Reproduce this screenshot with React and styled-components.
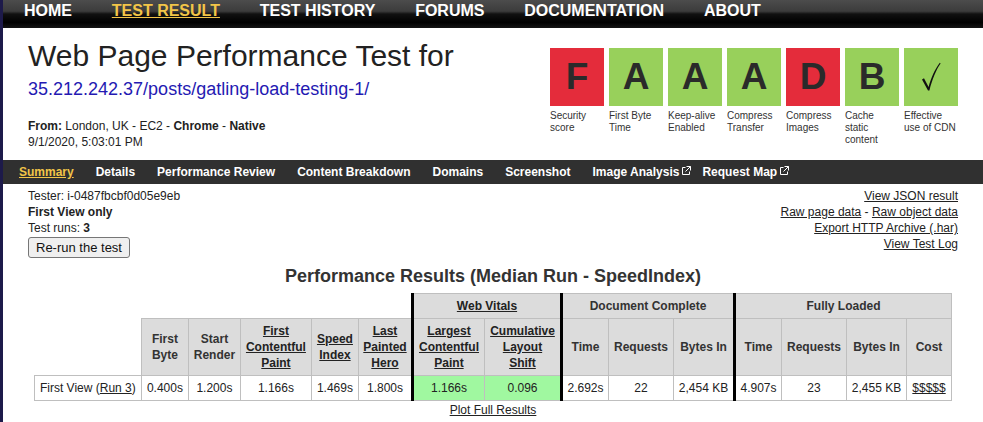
import React from 'react';
import styled, { createGlobalStyle } from 'styled-components';

const GlobalStyle = createGlobalStyle`
  html, body {
    margin: 0;
    padding: 0;
    background: #1d1a4a;
  }
  body {
    font-family: "Liberation Sans", Arial, sans-serif;
    color: #222;
  }
`;

const Page = styled.div`
  margin-left: 3px;
  min-height: 100vh;
  background: #fff;
`;

const TopNav = styled.nav`
  height: 28px;
  display: flex;
  align-items: flex-start;
  gap: 39.8px;
  padding-left: 21px;
  background: linear-gradient(#4c4c4c 0%, #3c3c3c 40%, #111 50%, #000 80%, #141414 100%);
`;

const TopLink = styled.a`
  font-size: 16px;
  font-weight: bold;
  line-height: 22px;
  color: ${({ $active }) => ($active ? '#f2c548' : '#fff')};
  text-decoration: ${({ $active }) => ($active ? 'underline' : 'none')};
`;

const Header = styled.header`
  display: flex;
  justify-content: space-between;
  padding: 10px 25px 0 25px;
  height: 122px;
`;

const TitleBlock = styled.div`
  display: flex;
  flex-direction: column;
`;

const Title = styled.h1`
  margin: 0;
  font-size: 30px;
  line-height: 36px;
  font-weight: normal;
  color: #222;
`;

const UrlLink = styled.a`
  margin-top: 4px;
  font-size: 18px;
  line-height: 22px;
  color: #2419b2;
  text-decoration: none;
`;

const Meta = styled.div`
  margin-top: 18px;
  font-size: 12px;
  line-height: 16px;
  color: #222;
`;

const Grades = styled.ul`
  display: flex;
  gap: 5px;
  margin: 10px 0 0 0;
  padding: 0;
  list-style: none;
`;

const Grade = styled.li`
  width: 54px;
  display: flex;
  flex-direction: column;
`;

const GradeBox = styled.div`
  height: 58px;
  display: flex;
  align-items: center;
  justify-content: center;
  background: ${({ $bad }) => ($bad ? '#e42c3b' : '#98d05b')};
  color: #2a2a2a;
  font-size: 37px;
  font-weight: bold;
`;

const GradeLabel = styled.div`
  margin-top: 4px;
  font-size: 10px;
  line-height: 12px;
  color: #333;
`;

const SubNav = styled.nav`
  height: 24px;
  display: flex;
  align-items: center;
  padding-left: 16px;
  background: #303030;
`;

const SubLink = styled.a`
  display: flex;
  align-items: center;
  margin-right: ${({ $external }) => ($external ? '11px' : '22px')};
  font-size: 12px;
  font-weight: bold;
  color: ${({ $active }) => ($active ? '#f2c548' : '#fff')};
  text-decoration: ${({ $active }) => ($active ? 'underline' : 'none')};

  svg {
    margin-left: 3px;
    margin-top: -3px;
  }
`;

const InfoRow = styled.div`
  display: flex;
  justify-content: space-between;
  padding: 4px 25px 0 25px;
  font-size: 12px;
  line-height: 16px;
`;

const InfoLeft = styled.div`
  display: flex;
  flex-direction: column;
  align-items: flex-start;
`;

const InfoRight = styled.div`
  display: flex;
  flex-direction: column;
  align-items: flex-end;
`;

const Button = styled.button`
  margin-top: 1px;
  height: 21px;
  padding: 0 7px;
  font-family: "Liberation Sans", Arial, sans-serif;
  font-size: 13px;
  color: #111;
  background: #efefef;
  border: 1px solid #767676;
  border-radius: 3px;
`;

const TextLink = styled.a`
  color: #222;
  text-decoration: underline;
`;

const ResultsTitle = styled.h2`
  margin: 6px 0 0 0;
  text-align: center;
  font-size: 18px;
  line-height: 24px;
  font-weight: bold;
  color: #333;
`;

const Table = styled.table`
  margin: 5px auto 0 auto;
  border-collapse: collapse;
  table-layout: fixed;
  width: 917px;
  font-size: 12px;
  line-height: 16px;
`;

const Th = styled.th`
  padding: 4px 2px;
  height: ${({ $group }) => ($group ? '16px' : '48px')};
  background: #dcdcdc;
  border: 1px solid #bfbfbf;
  border-left: ${({ $start }) => ($start ? '3px solid #000' : '1px solid #bfbfbf')};
  color: #333;
  font-weight: bold;
  text-align: center;
  vertical-align: middle;

  a {
    color: #222;
  }
`;

const Blank = styled.th`
  border: none;
  background: transparent;
`;

const Td = styled.td`
  padding: 4px 2px;
  height: 15px;
  border: 1px solid #bfbfbf;
  border-left: ${({ $start }) => ($start ? '3px solid #000' : '1px solid #bfbfbf')};
  background: ${({ $good }) => ($good ? '#a0f8a0' : '#fff')};
  color: #222;
  text-align: ${({ $left }) => ($left ? 'left' : 'center')};
  padding-left: ${({ $left }) => ($left ? '5px' : '2px')};
  white-space: nowrap;
`;

const PlotLink = styled.div`
  margin-top: 1px;
  text-align: center;
  font-size: 12px;
  line-height: 16px;
`;

const ExternalIcon = () => (
  <svg width="9" height="9" viewBox="0 0 9 9" fill="none" stroke="#fff" strokeWidth="1">
    <path d="M3.5 1.5H0.5V8.5H7.5V5.5" />
    <path d="M4.5 0.5H8.5V4.5" />
    <path d="M8.5 0.5L3.5 5.5" />
  </svg>
);

const CheckMark = () => (
  <svg width="20" height="30" viewBox="0 0 20 30">
    <path
      d="M1 17.5 L3 16.2 L7.6 25 C10 16 14 7 18.8 0.8 L19.6 1.6 C15 8 11.2 17.5 8.4 28.5 L7 28.5 Z"
      fill="#111"
    />
  </svg>
);

const topLinks = ['HOME', 'TEST RESULT', 'TEST HISTORY', 'FORUMS', 'DOCUMENTATION', 'ABOUT'];

const grades = [
  { value: 'F', label: 'Security score', bad: true },
  { value: 'A', label: 'First Byte Time' },
  { value: 'A', label: 'Keep-alive Enabled' },
  { value: 'A', label: 'Compress Transfer' },
  { value: 'D', label: 'Compress Images', bad: true },
  { value: 'B', label: 'Cache static content' },
  { value: 'check', label: 'Effective use of CDN' },
];

const subLinks = [
  { name: 'Summary', active: true },
  { name: 'Details' },
  { name: 'Performance Review' },
  { name: 'Content Breakdown' },
  { name: 'Domains' },
  { name: 'Screenshot' },
  { name: 'Image Analysis', external: true },
  { name: 'Request Map', external: true },
];

const colWidths = [107, 47, 52, 71, 47, 54, 72, 77, 47, 65, 61, 47, 65, 60, 45];

const headers = [
  { lines: ['First', 'Byte'] },
  { lines: ['Start', 'Render'] },
  { lines: ['First', 'Contentful', 'Paint'], link: true },
  { lines: ['Speed', 'Index'], link: true },
  { lines: ['Last', 'Painted', 'Hero'], link: true },
  { lines: ['Largest', 'Contentful', 'Paint'], link: true, start: true },
  { lines: ['Cumulative', 'Layout', 'Shift'], link: true },
  { lines: ['Time'], start: true },
  { lines: ['Requests'] },
  { lines: ['Bytes In'] },
  { lines: ['Time'], start: true },
  { lines: ['Requests'] },
  { lines: ['Bytes In'] },
  { lines: ['Cost'] },
];

const values = [
  { v: '0.400s' },
  { v: '1.200s' },
  { v: '1.166s' },
  { v: '1.469s' },
  { v: '1.800s' },
  { v: '1.166s', good: true, start: true },
  { v: '0.096', good: true },
  { v: '2.692s', start: true },
  { v: '22' },
  { v: '2,454 KB' },
  { v: '4.907s', start: true },
  { v: '23' },
  { v: '2,455 KB' },
];

const renderLines = lines =>
  lines.map((line, i) => (
    <React.Fragment key={line + i}>
      {i > 0 && <br />}
      {line}
    </React.Fragment>
  ));

const App = () => (
  <>
    <GlobalStyle />
    <Page>
      <TopNav>
        {topLinks.map(name => (
          <TopLink key={name} href="#" $active={name === 'TEST RESULT'}>
            {name}
          </TopLink>
        ))}
      </TopNav>

      <Header>
        <TitleBlock>
          <Title>Web Page Performance Test for</Title>
          <UrlLink href="#">35.212.242.37/posts/gatling-load-testing-1/</UrlLink>
          <Meta>
            <b>From:</b> London, UK - EC2 - <b>Chrome</b> - <b>Native</b>
            <br />
            9/1/2020, 5:03:01 PM
          </Meta>
        </TitleBlock>
        <Grades>
          {grades.map(g => (
            <Grade key={g.label}>
              <GradeBox $bad={g.bad}>{g.value === 'check' ? <CheckMark /> : g.value}</GradeBox>
              <GradeLabel>{g.label}</GradeLabel>
            </Grade>
          ))}
        </Grades>
      </Header>

      <SubNav>
        {subLinks.map(link => (
          <SubLink key={link.name} href="#" $active={link.active} $external={link.external}>
            {link.name}
            {link.external && <ExternalIcon />}
          </SubLink>
        ))}
      </SubNav>

      <InfoRow>
        <InfoLeft>
          <span>Tester: i-0487fbcbf0d05e9eb</span>
          <b>First View only</b>
          <span>
            Test runs: <b>3</b>
          </span>
          <Button>Re-run the test</Button>
        </InfoLeft>
        <InfoRight>
          <TextLink href="#">View JSON result</TextLink>
          <span>
            <TextLink href="#">Raw page data</TextLink> - <TextLink href="#">Raw object data</TextLink>
          </span>
          <TextLink href="#">Export HTTP Archive (.har)</TextLink>
          <TextLink href="#">View Test Log</TextLink>
        </InfoRight>
      </InfoRow>

      <ResultsTitle>Performance Results (Median Run - SpeedIndex)</ResultsTitle>

      <Table>
        <colgroup>
          {colWidths.map((w, i) => (
            <col key={i} style={{ width: w }} />
          ))}
        </colgroup>
        <thead>
          <tr>
            <Blank colSpan={6} />
            <Th colSpan={2} $group $start>
              <a href="#">Web Vitals</a>
            </Th>
            <Th colSpan={3} $group $start>
              Document Complete
            </Th>
            <Th colSpan={4} $group $start>
              Fully Loaded
            </Th>
          </tr>
          <tr>
            <Blank />
            {headers.map((h, i) => (
              <Th key={i} $start={h.start}>
                {h.link ? <a href="#">{renderLines(h.lines)}</a> : renderLines(h.lines)}
              </Th>
            ))}
          </tr>
        </thead>
        <tbody>
          <tr>
            <Td $left>
              First View (<TextLink href="#">Run 3</TextLink>)
            </Td>
            {values.map((c, i) => (
              <Td key={i} $good={c.good} $start={c.start}>
                {c.v}
              </Td>
            ))}
            <Td>
              <TextLink href="#">$$$$$</TextLink>
            </Td>
          </tr>
        </tbody>
      </Table>

      <PlotLink>
        <TextLink href="#">Plot Full Results</TextLink>
      </PlotLink>
    </Page>
  </>
);

export default App;
